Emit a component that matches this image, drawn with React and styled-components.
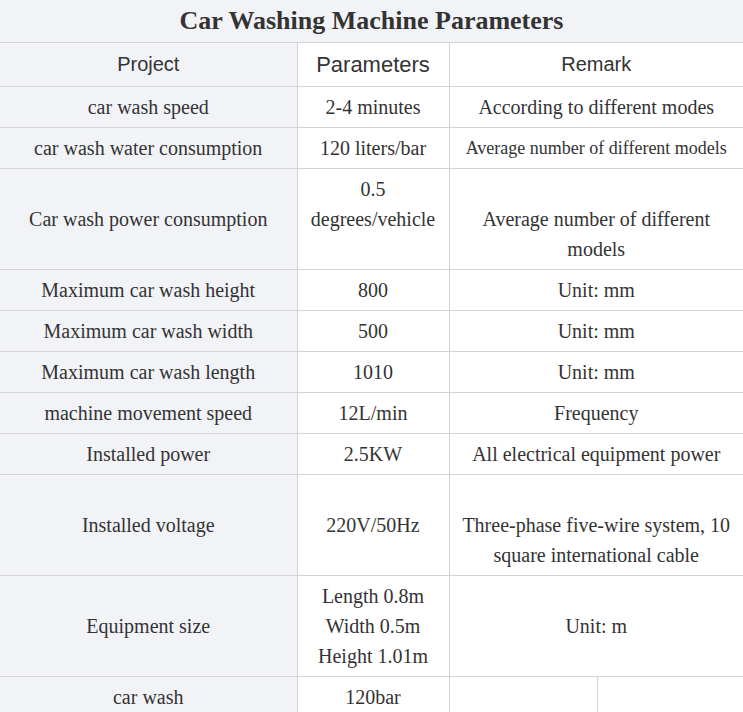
import React from 'react';
import styled, { createGlobalStyle } from 'styled-components';

const Global = createGlobalStyle`
  html, body { margin: 0; padding: 0; background: #fff; }
  body { font-family: "Liberation Serif", "Times New Roman", serif; color: #333; }
`;

const Table = styled.table`
  width: 743px;
  border-collapse: collapse;
  table-layout: fixed;
  font-family: "Liberation Serif", "Times New Roman", serif;
  color: #333;
`;

const TitleCell = styled.th`
  background: #f2f3f7;
  font-family: "Liberation Serif", "Times New Roman", serif;
  font-size: 26px;
  font-weight: 700;
  line-height: 31px;
  padding: 5px 0 6px;
  border-bottom: 1px solid #d3d3d3;
  color: #333;
`;

const HeadCell = styled.th`
  background: ${(p) => (p.$shade ? '#f2f3f7' : '#fff')};
  font-family: "Liberation Sans", Arial, sans-serif;
  font-weight: 400;
  font-size: ${(p) => (p.$wide ? '22px' : '20px')};
  line-height: 33px;
  padding: 5px 6px;
  color: #333;
  border: 1px solid #d3d3d3;
  border-top: none;
  &:first-child { border-left: none; }
  &:last-child { border-right: none; }
`;

const Cell = styled.td`
  background: ${(p) => (p.$shade ? '#f2f3f7' : '#fff')};
  font-family: "Liberation Serif", "Times New Roman", serif;
  font-size: ${(p) => (p.$small ? '18px' : '20px')};
  line-height: 30px;
  padding: 5px 4px;
  color: #333;
  text-align: center;
  vertical-align: middle;
  white-space: nowrap;
  border: 1px solid #d3d3d3;
  &:first-child { border-left: none; }
  &:last-child { border-right: none; }
`;

const rows = [
  ['car wash speed', '2-4 minutes', 'According to different modes'],
  ['car wash water consumption', '120 liters/bar', 'Average number of different models', true],
  ['Car wash power consumption', ['0.5', 'degrees/vehicle', ''], ['', 'Average number of different', 'models']],
  ['Maximum car wash height', '800', 'Unit: mm'],
  ['Maximum car wash width', '500', 'Unit: mm'],
  ['Maximum car wash length', '1010', 'Unit: mm'],
  ['machine movement speed', '12L/min', 'Frequency'],
  ['Installed power', '2.5KW', 'All electrical equipment power'],
  ['Installed voltage', '220V/50Hz', ['', 'Three-phase five-wire system, 10', 'square international cable']],
  ['Equipment size', ['Length 0.8m', 'Width 0.5m', 'Height 1.01m'], 'Unit: m'],
];

function Lines({ value }) {
  if (!Array.isArray(value)) return value;
  return value.map((line, i) => (
    <React.Fragment key={i}>
      {i > 0 && <br />}
      {line || '\u00a0'}
    </React.Fragment>
  ));
}

export default function App() {
  return (
    <>
      <Global />
      <Table>
        <colgroup>
          <col style={{ width: 297 }} />
          <col style={{ width: 152 }} />
          <col style={{ width: 148 }} />
          <col style={{ width: 146 }} />
        </colgroup>
        <thead>
          <tr>
            <TitleCell colSpan={4}>Car Washing Machine Parameters</TitleCell>
          </tr>
          <tr>
            <HeadCell $shade>Project</HeadCell>
            <HeadCell $wide>Parameters</HeadCell>
            <HeadCell colSpan={2}>Remark</HeadCell>
          </tr>
        </thead>
        <tbody>
          {rows.map(([name, param, remark, small]) => (
            <tr key={name}>
              <Cell $shade>{name}</Cell>
              <Cell><Lines value={param} /></Cell>
              <Cell colSpan={2} $small={small}><Lines value={remark} /></Cell>
            </tr>
          ))}
          <tr>
            <Cell $shade>car wash</Cell>
            <Cell>120bar</Cell>
            <Cell />
            <Cell />
          </tr>
        </tbody>
      </Table>
    </>
  );
}
